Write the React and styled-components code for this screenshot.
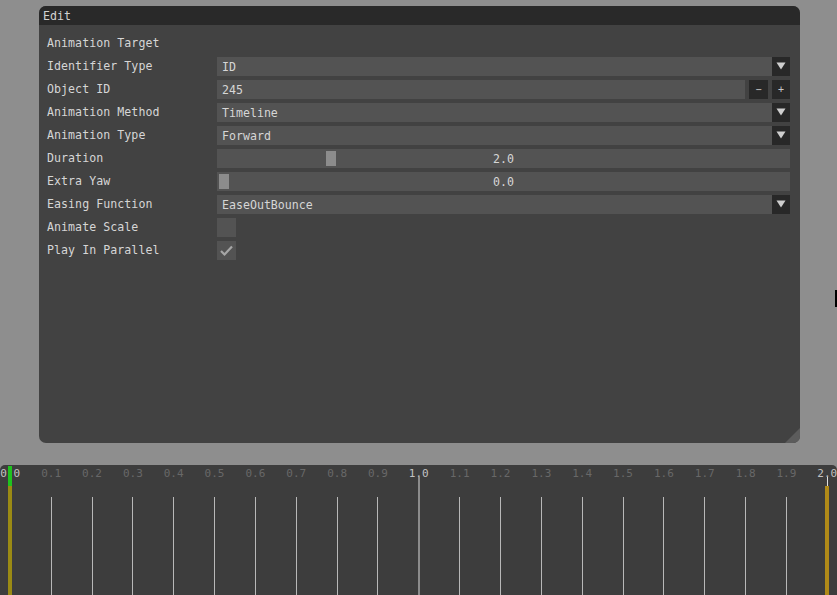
import React from "react";
import styled, { createGlobalStyle } from "styled-components";

const GlobalStyle = createGlobalStyle`
  html, body {
    margin: 0;
    padding: 0;
    background: #8e8e8e;
  }
  body {
    font-family: "DejaVu Sans Mono", "Liberation Mono", monospace;
  }
`;

const Page = styled.div`
  position: relative;
  width: 837px;
  height: 595px;
  overflow: hidden;
  background: #8e8e8e;
  padding-top: 6px;
  box-sizing: border-box;
`;

const Window = styled.div`
  position: relative;
  margin-left: 39px;
  width: 761px;
  height: 437px;
  background: #424242;
  border-radius: 7px;
  overflow: hidden;
  display: flex;
  flex-direction: column;
`;

const TitleBar = styled.div`
  height: 19px;
  line-height: 20px;
  padding-left: 4px;
  background: #292929;
  color: #d2d2d2;
  font-size: 11.6px;
`;

const Body = styled.div`
  display: flex;
  flex-direction: column;
  gap: 4px;
  padding: 8px 10px 0 8px;
`;

const Row = styled.div`
  display: grid;
  grid-template-columns: 170px 1fr;
  align-items: center;
  height: 19px;
`;

const Label = styled.span`
  color: #d6d6d6;
  font-size: 11.6px;
  line-height: 20px;
  letter-spacing: 0.05px;
  white-space: pre;
`;

const Controls = styled.div`
  display: flex;
  gap: ${(p) => (p.$gap ? "4px" : "0")};
  height: 19px;
`;

const Field = styled.div`
  flex: 1;
  padding-left: 5px;
  background: #535353;
  color: #d6d6d6;
  font-size: 11.6px;
  line-height: 20px;
  white-space: pre;
`;

const ArrowBox = styled.div`
  width: 18px;
  height: 19px;
  display: flex;
  align-items: center;
  justify-content: center;
  background: #282828;
`;

const StepButton = styled.div`
  width: ${(p) => p.$w || 19}px;
  height: 19px;
  display: flex;
  align-items: center;
  justify-content: center;
  background: #282828;
  color: #c8c8c8;
  font-size: 10px;
`;

const SliderTrack = styled.div`
  position: relative;
  flex: 1;
  background: #535353;
  color: #d6d6d6;
  font-size: 11.6px;
  line-height: 20px;
  text-align: center;
`;

const Grab = styled.div`
  position: absolute;
  top: 2px;
  bottom: 2px;
  width: 10px;
  background: #8c8c8c;
`;

const SliderText = styled.span`
  position: relative;
`;

const CheckBox = styled.div`
  width: 19px;
  height: 19px;
  display: flex;
  align-items: center;
  justify-content: center;
  background: #535353;
`;

const ResizeGrip = styled.div`
  position: absolute;
  right: 0;
  bottom: 0;
  width: 15px;
  height: 15px;
  background: #5c5c5c;
  clip-path: polygon(100% 0, 100% 100%, 0 100%);
`;

const Timeline = styled.div`
  position: relative;
  margin-top: 22px;
  height: 140px;
  background: #3d3d3d;
  border-radius: 5px 5px 0 0;
  overflow: hidden;
`;

const TickLabel = styled.span`
  position: absolute;
  top: 2px;
  transform: translateX(-50%);
  font-size: 11px;
  line-height: 14px;
  color: ${(p) => (p.$major ? "#c2c2c2" : "#686868")};
  white-space: pre;
`;

const Tick = styled.div`
  position: absolute;
  top: ${(p) => (p.$major ? 12 : 32)}px;
  bottom: 0;
  width: ${(p) => (p.$major ? 2 : 1)}px;
  background: ${(p) => (p.$major ? "#8c8c8c" : "#b8b8b8")};
`;

const EndTick = styled.div`
  position: absolute;
  top: 12px;
  height: 10px;
  width: 1px;
  background: #e0e0e0;
`;

const Marker = styled.div`
  position: absolute;
  width: 4px;
  top: ${(p) => p.$top}px;
  height: ${(p) => (p.$h ? `${p.$h}px` : "auto")};
  bottom: ${(p) => (p.$h ? "auto" : "0")};
  background: ${(p) => p.$color};
`;

const MouseCursor = styled.div`
  position: absolute;
  left: 835px;
  top: 290px;
  width: 2px;
  height: 17px;
  background: #000;
`;

const Arrow = () => (
  <svg width="10" height="8" viewBox="0 0 10 8">
    <polygon points="0.5,0.5 9.5,0.5 5,7.5" fill="#cfcfcf" />
  </svg>
);

const Check = () => (
  <svg width="15" height="13" viewBox="0 0 15 13">
    <polyline
      points="2,7 5.5,10.5 13,2.5"
      fill="none"
      stroke="#a6a6a6"
      strokeWidth="2.2"
    />
  </svg>
);

const Combo = ({ value }) => (
  <Controls>
    <Field>{value}</Field>
    <ArrowBox>
      <Arrow />
    </ArrowBox>
  </Controls>
);

const TRACK = 573;

const Slider = ({ value, min, max }) => {
  const frac = (value - min) / (max - min);
  const left = 2 + frac * (TRACK - 4 - 10);
  return (
    <Controls>
      <SliderTrack>
        <Grab style={{ left: `${left}px` }} />
        <SliderText>{value.toFixed(1)}</SliderText>
      </SliderTrack>
    </Controls>
  );
};

const ticks = Array.from({ length: 21 }, (_, i) => i);
const tickX = (i) => 10.3 + 40.85 * i;

export default function App() {
  return (
    <Page>
      <GlobalStyle />
      <Window>
        <TitleBar>Edit</TitleBar>
        <Body>
          <Row>
            <Label>Animation Target</Label>
          </Row>
          <Row>
            <Label>Identifier Type</Label>
            <Combo value="ID" />
          </Row>
          <Row>
            <Label>Object ID</Label>
            <Controls $gap>
              <Field>245</Field>
              <StepButton>−</StepButton>
              <StepButton $w={18}>+</StepButton>
            </Controls>
          </Row>
          <Row>
            <Label>Animation Method</Label>
            <Combo value="Timeline" />
          </Row>
          <Row>
            <Label>Animation Type</Label>
            <Combo value="Forward" />
          </Row>
          <Row>
            <Label>Duration</Label>
            <Slider value={2.0} min={0.1} max={10} />
          </Row>
          <Row>
            <Label>Extra Yaw</Label>
            <Slider value={0.0} min={0} max={360} />
          </Row>
          <Row>
            <Label>Easing Function</Label>
            <Combo value="EaseOutBounce" />
          </Row>
          <Row>
            <Label>Animate Scale</Label>
            <CheckBox />
          </Row>
          <Row>
            <Label>Play In Parallel</Label>
            <CheckBox>
              <Check />
            </CheckBox>
          </Row>
        </Body>
        <ResizeGrip />
      </Window>
      <Timeline>
        {ticks.map((i) => {
          const major = i % 10 === 0;
          return (
            <React.Fragment key={i}>
              <TickLabel $major={major} style={{ left: `${tickX(i)}px` }}>
                {(i / 10).toFixed(1)}
              </TickLabel>
              {i > 0 && i < 20 && (
                <Tick
                  $major={major}
                  style={{ left: `${tickX(i) - (major ? 1 : 0.5)}px` }}
                />
              )}
            </React.Fragment>
          );
        })}
        <EndTick style={{ left: `${tickX(20)}px` }} />
        <Marker $top={1} $h={20} $color="#1fc31f" style={{ left: "8px" }} />
        <Marker $top={21} $color="#9a8a14" style={{ left: "8px" }} />
        <Marker $top={21} $color="#b08a18" style={{ left: `${tickX(20) - 2}px` }} />
      </Timeline>
      <MouseCursor />
    </Page>
  );
}
